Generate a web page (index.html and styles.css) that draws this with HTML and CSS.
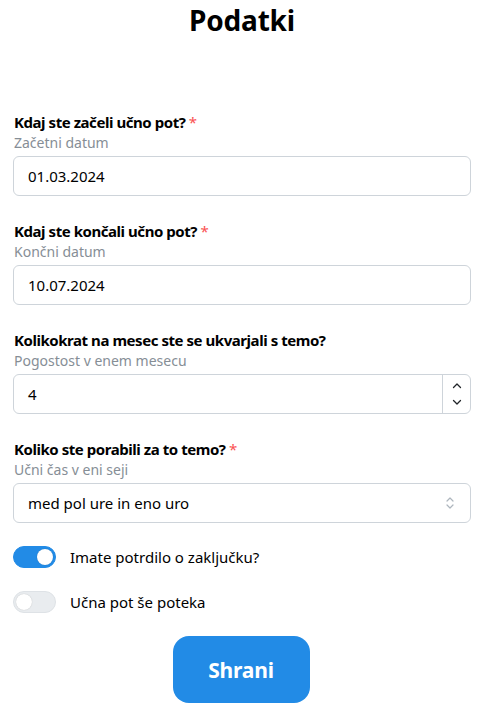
FILE: index.html
```html
<!DOCTYPE html>
<html lang="sl">
<head>
<meta charset="utf-8">
<link rel="stylesheet" href="styles.css">
</head>
<body>
<div class="page">
  <h1 class="title">Podatki</h1>
  <form class="form">
    <div class="field">
      <label class="label">Kdaj ste začeli učno pot? <span class="req">*</span></label>
      <div class="desc">Začetni datum</div>
      <div class="input"><span class="value">01.03.2024</span></div>
    </div>
    <div class="field">
      <label class="label">Kdaj ste končali učno pot? <span class="req">*</span></label>
      <div class="desc">Končni datum</div>
      <div class="input"><span class="value">10.07.2024</span></div>
    </div>
    <div class="field">
      <label class="label">Kolikokrat na mesec ste se ukvarjali s temo?</label>
      <div class="desc">Pogostost v enem mesecu</div>
      <div class="input number">
        <span class="value">4</span>
        <div class="spin">
          <svg class="chev" width="12" height="12" viewBox="0 0 12 12"><path d="M2.5 7.5 L6 4 L9.5 7.5" fill="none" stroke="#212529" stroke-width="1.3" stroke-linecap="round" stroke-linejoin="round"/></svg>
          <svg class="chev" width="12" height="12" viewBox="0 0 12 12"><path d="M2.5 4.5 L6 8 L9.5 4.5" fill="none" stroke="#212529" stroke-width="1.3" stroke-linecap="round" stroke-linejoin="round"/></svg>
        </div>
      </div>
    </div>
    <div class="field">
      <label class="label">Koliko ste porabili za to temo? <span class="req">*</span></label>
      <div class="desc">Učni čas v eni seji</div>
      <div class="input select">
        <span class="value">med pol ure in eno uro</span>
        <svg class="updown" width="12" height="16" viewBox="0 0 12 16"><path d="M3 6 L6 3 L9 6 M3 10 L6 13 L9 10" fill="none" stroke="#adb5bd" stroke-width="1.2" stroke-linecap="round" stroke-linejoin="round"/></svg>
      </div>
    </div>
    <div class="toggles">
      <div class="switch-row">
        <span class="switch on"><span class="knob"></span></span>
        <span class="switch-label">Imate potrdilo o zaključku?</span>
      </div>
      <div class="switch-row">
        <span class="switch"><span class="knob"></span></span>
        <span class="switch-label">Učna pot še poteka</span>
      </div>
      <div class="actions">
        <button type="button" class="btn">Shrani</button>
      </div>
    </div>
  </form>
</div>
</body>
</html>
```
FILE: styles.css
```css
* { box-sizing: border-box; }
html, body { margin: 0; padding: 0; background: #fff; }
body {
  font-family: "Noto Sans", "Open Sans", sans-serif;
  color: #000;
}
.page {
  padding: 0 11px 0 13px;
}
.title {
  margin: 0;
  height: 40px;
  line-height: 40px;
  text-align: center;
  font-size: 28px;
  font-weight: 700;
  letter-spacing: -0.2px;
}
.form {
  margin-top: 72px;
  display: flex;
  flex-direction: column;
  gap: 25px;
}
.field { display: flex; flex-direction: column; }
.label {
  font-size: 15px;
  font-weight: 700;
  line-height: 20px;
  padding-left: 1px;
  letter-spacing: -0.45px;
}
.req { color: #fa5252; font-weight: 400; }
.desc {
  font-size: 14px;
  line-height: 20px;
  color: #868e96;
  margin-top: 1px;
  margin-bottom: 3px;
  padding-left: 1px;
}
.input {
  height: 40px;
  border: 1px solid #ced4da;
  border-radius: 6px;
  display: flex;
  align-items: center;
  padding-left: 14px;
  font-size: 15px;
  color: #000;
  background: #fff;
}
.value { flex: 1; }
.number { padding-right: 0; }
.spin {
  width: 28px;
  height: 100%;
  border-left: 1px solid #ced4da;
  display: flex;
  flex-direction: column;
  align-items: center;
  justify-content: space-around;
  padding: 3px 0;
}
.select { padding-right: 14px; }
.toggles {
  margin-top: -2px;
  display: flex;
  flex-direction: column;
  gap: 23px;
}
.switch-row {
  display: flex;
  align-items: center;
  gap: 14px;
  height: 22px;
}
.switch {
  width: 43px;
  height: 22px;
  border-radius: 11px;
  background: #e9ecef;
  border: 1px solid #dee2e6;
  display: flex;
  align-items: center;
  padding: 0 2px;
}
.knob {
  width: 16px;
  height: 16px;
  border-radius: 50%;
  background: #fff;
  box-shadow: 0 0 1px rgba(0,0,0,0.25);
}
.switch.on {
  background: #228be6;
  border-color: #228be6;
  justify-content: flex-end;
}
.switch-label {
  font-size: 15px;
  color: #000;
}
.actions {
  display: flex;
  justify-content: center;
  padding-right: 2px;
}
.btn {
  width: 137px;
  height: 67px;
  border: none;
  border-radius: 16px;
  background: #228be6;
  color: #fff;
  font-family: "Noto Sans", sans-serif;
  font-size: 21px;
  font-weight: 700;
  letter-spacing: -0.2px;
}
```
